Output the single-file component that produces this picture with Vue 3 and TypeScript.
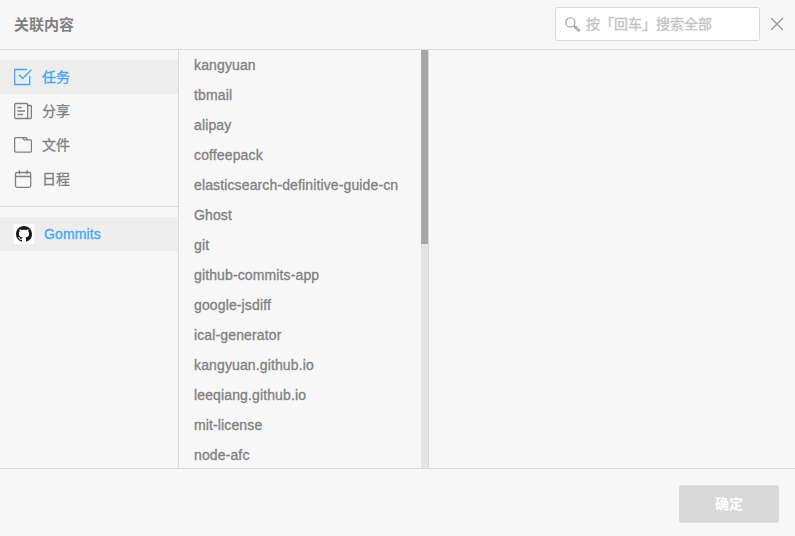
<script setup lang="ts">
import { ref } from 'vue'

interface NavItem {
  id: string
  label: string
}

const navItems: NavItem[] = [
  { id: 'task', label: '任务' },
  { id: 'post', label: '分享' },
  { id: 'file', label: '文件' },
  { id: 'event', label: '日程' },
]

const projects: string[] = [
  'kangyuan',
  'tbmail',
  'alipay',
  'coffeepack',
  'elasticsearch-definitive-guide-cn',
  'Ghost',
  'git',
  'github-commits-app',
  'google-jsdiff',
  'ical-generator',
  'kangyuan.github.io',
  'leeqiang.github.io',
  'mit-license',
  'node-afc',
]

const active = ref('task')
const keyword = ref('')
</script>

<template>
  <div class="dialog">
    <header class="header">
      <h1 class="title">关联内容</h1>
      <label class="search">
        <svg class="search-icon" width="16" height="16" viewBox="0 0 16 16">
          <circle cx="5.4" cy="6.4" r="4.6" />
          <path d="M8.700 9.700l1.600 1.600M9.700 11.700l1.200-1.200 3.400 3.200a.85.85 0 0 1-1.200 1.200z" />
        </svg>
        <input v-model="keyword" class="search-input" type="text" placeholder="按「回车」搜索全部" />
      </label>
      <button class="close" type="button" aria-label="关闭">
        <svg width="14" height="14" viewBox="0 0 14 14"><path d="M1 1l12 12M13 1L1 13" /></svg>
      </button>
    </header>

    <main class="body">
      <aside class="sidebar">
        <nav class="nav">
          <a
            v-for="item in navItems"
            :key="item.id"
            class="nav-item"
            :class="{ active: active === item.id }"
            @click="active = item.id"
          >
            <svg class="nav-icon" width="18" height="18" viewBox="0 0 18 18">
              <path v-if="item.id === 'task'" d="M13 1.500H.7v15h15V8M5 6.700l3.700 3.800 8.700-8.700" />
              <template v-else-if="item.id === 'post'">
                <rect x=".7" y="1.500" width="13" height="15" rx="1.200" />
                <path d="M13.700 3.500h2.500a1.200 1.200 0 0 1 1.200 1.200v10.600a1.200 1.200 0 0 1-1.200 1.200h-4M3.500 5.500h4.200M3.500 9h7.500M3.500 12.500h5.500" />
              </template>
              <path
                v-else-if="item.id === 'file'"
                d="M1.900 1.600h6.600l1.800 2.200h5.900a1.300 1.300 0 0 1 1.300 1.300v9.700a1.300 1.300 0 0 1-1.300 1.300H1.900a1.300 1.300 0 0 1-1.300-1.300V2.900a1.300 1.300 0 0 1 1.300-1.300zM8.500 1.600h3.600l1.500 2.200"
              />
              <template v-else>
                <rect x="1.500" y="2.500" width="15.200" height="14.800" rx="1.500" />
                <path d="M1.500 6.500h15.200M5.400.3v4M13.100.3v4" />
              </template>
            </svg>
            <span>{{ item.label }}</span>
          </a>
        </nav>
        <nav class="nav">
          <a class="nav-item app active">
            <span class="avatar">
              <svg width="16" height="16" viewBox="0 0 16 16">
                <path
                  d="M8 0C3.580 0 0 3.580 0 8c0 3.540 2.290 6.530 5.470 7.590.4.070.55-.170.55-.380 0-.190-.010-.820-.010-1.490-2.010.370-2.530-.490-2.690-.940-.090-.230-.480-.940-.820-1.130-.280-.150-.680-.520-.010-.530.630-.010 1.080.580 1.230.820.720 1.210 1.870.870 2.330.660.070-.520.280-.870.510-1.070-1.780-.2-3.640-.890-3.640-3.950 0-.870.310-1.590.820-2.150-.080-.2-.360-1.020.080-2.120 0 0 .670-.210 2.200.820.640-.180 1.320-.270 2-.270s1.360.090 2 .270c1.530-1.040 2.200-.820 2.200-.820.440 1.100.160 1.920.080 2.120.510.560.820 1.270.820 2.150 0 3.070-1.870 3.750-3.650 3.950.290.250.540.730.540 1.480 0 1.070-.010 1.930-.010 2.200 0 .210.150.460.550.380A8.010 8.010 0 0 0 16 8c0-4.420-3.580-8-8-8z"
                />
              </svg>
            </span>
            <span>Gommits</span>
          </a>
        </nav>
      </aside>

      <section class="projects">
        <ul class="list">
          <li v-for="name in projects" :key="name" class="row">{{ name }}</li>
        </ul>
        <div class="track"><div class="thumb"></div></div>
      </section>

      <section class="detail"></section>
    </main>

    <footer class="footer">
      <button class="confirm" type="button">确定</button>
    </footer>
  </div>
</template>

<style>
body {
  background: #f7f7f7;
}
</style>

<style scoped>
.dialog {
  display: flex;
  flex-direction: column;
  height: 100vh;
  overflow: hidden;
  background: #f7f7f7;
  color: #808080;
  font: 14px/20px 'Liberation Sans', 'Noto Sans CJK SC', sans-serif;
}
.header {
  display: flex;
  align-items: center;
  flex: none;
  box-sizing: border-box;
  height: 50px;
  padding: 0 11px 1px 14px;
  border-bottom: 1px solid #d9d9d9;
}
.title {
  flex: 1;
  margin: 0;
  padding-top: 1px;
  font-size: 15px;
  font-weight: 700;
}
.search {
  display: flex;
  align-items: center;
  box-sizing: border-box;
  width: 205px;
  height: 34px;
  padding: 0 9px;
  border: 1px solid #d9d9d9;
  border-radius: 3px;
  background: #fff;
}
.search-icon {
  flex: none;
  margin-right: 5px;
  fill: none;
  stroke: #969696;
  stroke-width: 1.1;
}
.search-input {
  width: 100%;
  min-width: 0;
  padding: 0;
  border: 0;
  outline: 0;
  background: none;
  color: #808080;
  font: inherit;
}
.search-input::placeholder {
  color: #c4c4c4;
  -webkit-text-stroke: 0.35px currentColor;
}
.close {
  display: flex;
  margin-left: 10px;
  padding: 0;
  border: 0;
  background: none;
}
.close svg {
  fill: none;
  stroke: #969696;
  stroke-width: 1.2;
}
.body {
  display: flex;
  flex: 1;
  min-height: 0;
}
.sidebar {
  flex: none;
  width: 178px;
  border-right: 1px solid #d9d9d9;
}
.nav {
  padding: 10px 0;
}
.nav + .nav {
  border-top: 1px solid #d9d9d9;
}
.nav-item {
  display: flex;
  align-items: center;
  gap: 10px;
  height: 34px;
  padding-left: 14px;
  -webkit-text-stroke: 0.3px currentColor;
}
.nav-item.active {
  background: #ededed;
  color: #3da8f5;
}
.nav-icon {
  flex: none;
  fill: none;
  stroke: currentColor;
  stroke-width: 1.3;
}
.avatar {
  display: flex;
  align-items: center;
  justify-content: center;
  width: 20px;
  height: 20px;
  background: #fff;
}
.avatar svg {
  fill: #1b1817;
}
.projects {
  display: flex;
  flex: none;
  width: 249px;
  border-right: 1px solid #d9d9d9;
}
.list {
  flex: 1;
  margin: 0;
  padding: 0;
  overflow: hidden;
  list-style: none;
}
.row {
  height: 30px;
  padding-left: 15px;
  line-height: 30px;
  white-space: nowrap;
}
.row,
.app {
  letter-spacing: 0.13px;
  -webkit-text-stroke: 0.3px currentColor;
}
.track {
  width: 7px;
  background: #e4e4e4;
}
.thumb {
  height: 194px;
  background: #a6a6a6;
}
.detail {
  flex: 1;
}
.footer {
  display: flex;
  align-items: center;
  justify-content: flex-end;
  flex: none;
  box-sizing: border-box;
  height: 68px;
  padding: 2px 16px 0 0;
  border-top: 1px solid #d9d9d9;
}
.confirm {
  width: 100px;
  height: 38px;
  padding: 0;
  border: 0;
  border-radius: 3px;
  background: #d9d9d9;
  color: #fff;
  font: inherit;
  font-weight: 700;
}
</style>
